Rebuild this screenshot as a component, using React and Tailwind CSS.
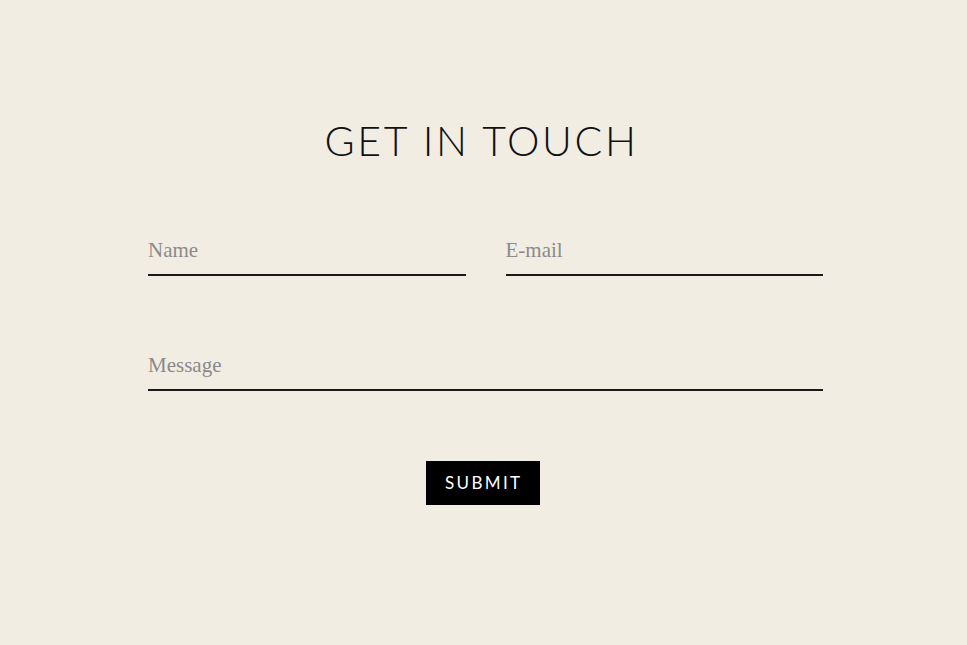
export default function App() {
  return (
    <div className="min-h-[645px] w-full bg-[#f2ede3] flex flex-col items-center">
      <h1
        className="mt-[113px] text-[41px] leading-[56px] font-light tracking-[0.065em] text-[#111] pr-[4px]"
        style={{ fontFamily: "Lato, 'Noto Sans', sans-serif" }}
      >
        GET IN TOUCH
      </h1>
      <form className="w-full pl-[148px] pr-[144px] mt-[66px]">
        <div className="flex gap-[40px]">
          <div className="flex-1 border-b-2 border-[#1a1a1a] pb-[9px]">
            <input
              placeholder="Name"
              className="w-full bg-transparent outline-none text-[21px] leading-[30px] text-[#888] placeholder-[#8a8a8a]"
              style={{ fontFamily: "'Liberation Serif', serif" }}
            />
          </div>
          <div className="flex-1 border-b-2 border-[#1a1a1a] pb-[9px]">
            <input
              placeholder="E-mail"
              className="w-full bg-transparent outline-none text-[21px] leading-[30px] text-[#888] placeholder-[#8a8a8a]"
              style={{ fontFamily: "'Liberation Serif', serif" }}
            />
          </div>
        </div>
        <div className="mt-[74px] border-b-2 border-[#1a1a1a] pb-[9px]">
          <input
            placeholder="Message"
            className="w-full bg-transparent outline-none text-[21px] leading-[30px] text-[#888] placeholder-[#8a8a8a]"
            style={{ fontFamily: "'Liberation Serif', serif" }}
          />
        </div>
        <div className="flex justify-center mt-[70px] pr-[6px]">
          <button
            type="button"
            className="w-[114px] h-[44px] bg-black text-white text-[17px] tracking-[0.14em] pl-[0.14em] font-normal"
            style={{ fontFamily: "Lato, 'Noto Sans', sans-serif" }}
          >
            SUBMIT
          </button>
        </div>
      </form>
    </div>
  );
}
